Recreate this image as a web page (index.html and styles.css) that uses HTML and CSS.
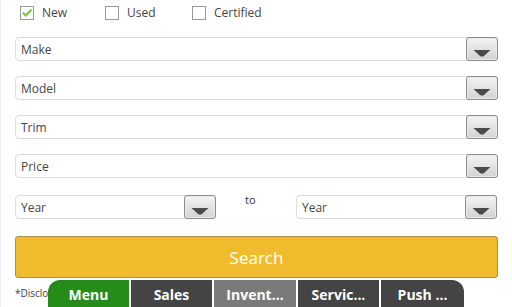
FILE: index.html
```html
<!DOCTYPE html>
<html>
<head>
<meta charset="utf-8">
<link rel="stylesheet" href="styles.css">
</head>
<body>
<div class="page">
  <div class="checks">
    <label class="check"><span class="box"><svg width="12" height="12" viewBox="0 0 12 12"><path d="M2.5 6.2 L5 8.6 L9.8 3.2" fill="none" stroke="#7dc63a" stroke-width="2.2" stroke-linecap="round" stroke-linejoin="round"/></svg></span>New</label>
    <label class="check"><span class="box"></span>Used</label>
    <label class="check"><span class="box"></span>Certified</label>
  </div>

  <div class="select"><span class="val">Make</span><span class="btn"><svg width="18" height="8" viewBox="0 0 18 8"><path d="M0.5 1 H17.5 L11 7 Q9 8 7 7 Z" fill="#4a4a4a"/></svg></span></div>
  <div class="select"><span class="val">Model</span><span class="btn"><svg width="18" height="8" viewBox="0 0 18 8"><path d="M0.5 1 H17.5 L11 7 Q9 8 7 7 Z" fill="#4a4a4a"/></svg></span></div>
  <div class="select"><span class="val">Trim</span><span class="btn"><svg width="18" height="8" viewBox="0 0 18 8"><path d="M0.5 1 H17.5 L11 7 Q9 8 7 7 Z" fill="#4a4a4a"/></svg></span></div>
  <div class="select"><span class="val">Price</span><span class="btn"><svg width="18" height="8" viewBox="0 0 18 8"><path d="M0.5 1 H17.5 L11 7 Q9 8 7 7 Z" fill="#4a4a4a"/></svg></span></div>

  <div class="years">
    <div class="select"><span class="val">Year</span><span class="btn"><svg width="18" height="8" viewBox="0 0 18 8"><path d="M0.5 1 H17.5 L11 7 Q9 8 7 7 Z" fill="#4a4a4a"/></svg></span></div>
    <div class="to">to</div>
    <div class="select"><span class="val">Year</span><span class="btn"><svg width="18" height="8" viewBox="0 0 18 8"><path d="M0.5 1 H17.5 L11 7 Q9 8 7 7 Z" fill="#4a4a4a"/></svg></span></div>
  </div>

  <div class="search">Search</div>
  <div class="disclaimer">*Disclosure</div>
</div>

<nav class="tabs">
  <div class="tab menu">Menu</div>
  <div class="tab">Sales</div>
  <div class="tab inv">Invent...</div>
  <div class="tab">Servic...</div>
  <div class="tab push">Push ...</div>
</nav>
</body>
</html>
```

FILE: styles.css
```css
html, body {
  margin: 0;
  padding: 0;
  background: #fff;
  overflow: hidden;
}
body {
  width: 512px;
  height: 307px;
  position: relative;
  font-family: "Open Sans", "Noto Sans", "DejaVu Sans", sans-serif;
  color: #444;
  border-left: 1px solid #f0f0f0;
  box-sizing: border-box;
}
.page {
  padding: 0 14px 0 14px;
}
.checks {
  display: flex;
  height: 26px;
  padding-top: 6px;
  padding-left: 5px;
  box-sizing: border-box;
  font-size: 12px;
  color: #444;
}
.check {
  display: flex;
  align-items: flex-start;
  line-height: 14px;
}
.check:nth-child(1) { width: 85px; }
.check:nth-child(2) { width: 87px; }
.box {
  width: 12px;
  height: 12px;
  border: 1px solid #9a9a9a;
  background: #fff;
  margin-right: 8px;
  display: flex;
  align-items: center;
  justify-content: center;
}
.select {
  position: relative;
  height: 24px;
  border: 1px solid #dcdcdc;
  border-radius: 4px;
  box-sizing: border-box;
  margin-top: 11px;
  display: flex;
  align-items: center;
  background: #fff;
}
.select + .select { margin-top: 15px; }
.val {
  flex: 1;
  padding-left: 5px;
  font-size: 12px;
  color: #444;
}
.btn {
  width: 32px;
  height: 24px;
  margin: -1px -1px -1px 0;
  box-sizing: border-box;
  border: 1px solid #8c8c8c;
  border-radius: 3px;
  background: linear-gradient(#f4f4f4, #d2d2d2);
  box-shadow: inset 0 0 0 1px #eaeaea;
  display: flex;
  justify-content: center;
  padding-top: 11px;
}
.btn svg { display: block; }
.years {
  display: grid;
  grid-template-columns: 201px 80px 201px;
  margin-top: 17px;
  align-items: start;
}
.years .select { margin-top: 0; }
.to {
  font-size: 11px;
  color: #333;
  padding-left: 29px;
  line-height: 12px;
  margin-top: -1px;
}
.search {
  margin-top: 17px;
  height: 42px;
  box-sizing: border-box;
  background: #f0bc2e;
  border: 1px solid #a89050;
  border-radius: 3px;
  color: #fff;
  font-size: 17px;
  display: flex;
  align-items: center;
  justify-content: center;
}
.disclaimer {
  margin-top: 9px;
  font-size: 10px;
  color: #444;
  line-height: 12px;
}
.tabs {
  position: absolute;
  left: 47px;
  top: 280px;
  display: flex;
  gap: 2px;
}
.tab {
  width: 81px;
  height: 30px;
  background: #444;
  color: #fff;
  font-weight: bold;
  font-size: 14px;
  text-align: center;
  line-height: 28px;
  box-sizing: border-box;
  padding-top: 1px;
}
.tab.menu {
  background: #258b19;
  border-top-left-radius: 12px;
}
.tab.inv {
  background: #7a7a7a;
  width: 82px;
}
.tab.push {
  width: 83px;
  border-top-right-radius: 12px;
}
```
